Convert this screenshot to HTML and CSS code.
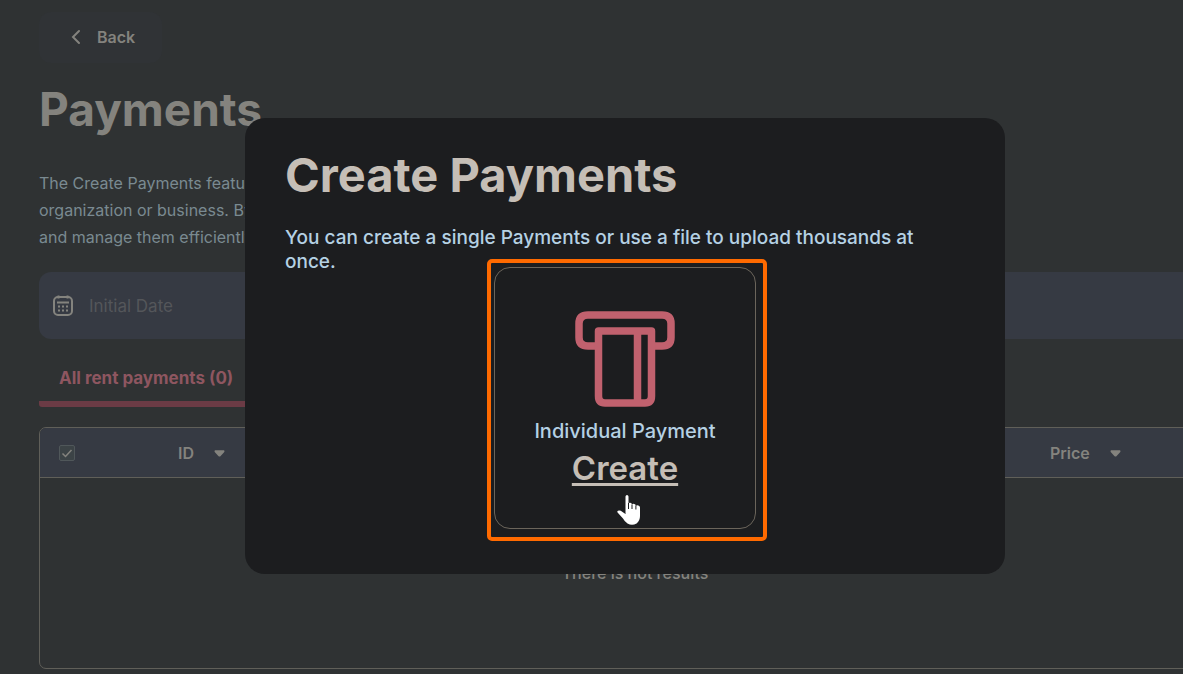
FILE: index.html
```html
<!DOCTYPE html>
<html lang="en">
<head>
<meta charset="utf-8">
<title>Payments</title>
<link rel="stylesheet" href="styles.css">
</head>
<body>
<main class="page">
  <button class="back" type="button">
    <svg class="back-icon" viewBox="0 0 10 16" aria-hidden="true"><path d="M8 2 2 8l6 6"/></svg>
    <span>Back</span>
  </button>
  <h1 class="title">Payments</h1>
  <p class="intro">The Create Payments feature<br>organization or business. By<br>and manage them efficiently</p>
  <label class="date">
    <svg class="date-icon" viewBox="0 0 20 22" aria-hidden="true">
      <rect x="1" y="2" width="18" height="18" rx="4"/>
      <path d="M4 7.500h12M5.500 .5v3M14.500 .5v3"/>
      <path class="dots" d="M5 11.500h2M9 11.500h2M13 11.500h2M5 15.500h2M9 15.500h2M13 15.500h2"/>
    </svg>
    <input class="date-input" type="text" placeholder="Initial Date" aria-label="Initial Date">
  </label>
  <nav class="tabs"><a class="tab" href="#all">All rent payments (0)</a></nav>
  <div class="table-box">
    <table class="table">
      <thead>
        <tr>
          <th class="col-check"><input class="check" type="checkbox" checked aria-label="Select all"></th>
          <th class="col-id"><button class="sort" type="button">ID <svg class="caret" viewBox="0 0 12 7" aria-hidden="true"><path d="M1 0h10q1 1 0 2L7 6.500q-1 .8-2 0L1 2Q0 1 1 0Z"/></svg></button></th>
          <th class="col-price"><button class="sort" type="button">Price <svg class="caret" viewBox="0 0 12 7" aria-hidden="true"><path d="M1 0h10q1 1 0 2L7 6.500q-1 .8-2 0L1 2Q0 1 1 0Z"/></svg></button></th>
        </tr>
      </thead>
      <tbody><tr><td class="empty" colspan="3">There is not results</td></tr></tbody>
    </table>
  </div>
</main>
<div class="overlay">
  <section class="modal" role="dialog" aria-labelledby="modal-title">
    <h2 class="modal-title" id="modal-title">Create Payments</h2>
    <p class="modal-text">You can create a single Payments or use a file to upload thousands at once.</p>
    <div class="card">
      <svg class="card-icon" viewBox="0 0 100 96" aria-hidden="true">
        <path d="M23 35H13Q4 35 4 26.500V12.500Q4 4 13 4H87Q96 4 96 12.500V26.500Q96 35 87 35H77"/>
        <path d="M23.500 20H76.500V85Q76.500 92 70 92H30Q23.500 92 23.500 85ZM62.500 20V92"/>
      </svg>
      <p class="card-label">Individual Payment</p>
      <a class="card-link" href="#create">Create</a>
      <span class="highlight"></span>
      <svg class="cursor" viewBox="0 0 24 32" aria-hidden="true"><path d="M8.500 2.500Q8.700 1 10 1t1.500 1.500V9.500Q12 8.500 13.300 8.800 14.800 9 15 10.500q.8-1 2.200-.5Q18.700 10.300 18.900 11.700q1-.8 2.400-.2Q23 12 23 13.500V22Q23 27 19.500 29.500 15 32 10.500 29.500 7.500 27.500 6 24.500L1 19Q-.5 17.500 1 16.800 3 16 5.500 18L8.500 20Z"/><path class="cursor-lines" d="M11.500 9v6M15 10.500V15M18.900 11.500V15.500"/></svg>
    </div>
  </section>
</div>
</body>
</html>
```
FILE: styles.css
```css
* { box-sizing: border-box; }
body {
  margin: 0;
  min-height: 100vh;
  overflow: hidden;
  background: #2f3233;
  color: #84837e;
  font-family: Inter, "Liberation Sans", sans-serif;
}
button { font: inherit; color: inherit; border: 0; }
.page { margin-right: -48px; padding: 12px 0 0 39px; }
.back {
  display: flex;
  align-items: center;
  gap: 16px;
  padding: 0 27px 2px 32px;
  height: 51px;
  border-radius: 12px;
  background: #303336;
  font-size: 16px;
  line-height: 20px;
  font-weight: 600;
}
.back-icon { width: 10px; height: 16px; fill: none; stroke: currentColor; stroke-width: 2; stroke-linecap: round; }
.title { margin: 18px 0 0; font-size: 46px; line-height: 56px; font-weight: 700; }
.intro { margin: 33px 0 0; font-size: 16px; line-height: 27px; color: #7a8a91; }
.date {
  display: flex;
  align-items: center;
  gap: 16px;
  height: 67px;
  margin-top: 21px;
  padding: 0 14px;
  border-radius: 12px;
  background: #363a43;
}
.date-icon { width: 20px; height: 22px; fill: none; stroke: #84837e; stroke-width: 2; }
.date-input { flex: 1; border: 0; padding: 0; background: none; font: 17px Inter, sans-serif; color: #84837e; }
.date-input::placeholder { color: #54565a; opacity: 1; }
.tabs { display: flex; margin-top: 17px; }
.tab {
  width: 220px;
  padding: 8px 0 9px 20px;
  border-bottom: 6px solid #6b3b45;
  border-radius: 3px;
  color: #8e5660;
  font-size: 17px;
  line-height: 28px;
  font-weight: 700;
  text-decoration: none;
  white-space: nowrap;
}
.table-box { margin-top: 20px; border: 1px solid #605f59; border-radius: 7px; overflow: hidden; }
.table { width: 100%; border-collapse: separate; border-spacing: 0; table-layout: fixed; }
.table th { height: 50px; padding: 0; background: #363a43; border-bottom: 1px solid #605f59; text-align: left; }
.table .col-check { width: 138px; padding-left: 19px; }
.col-id { width: 872px; }
.check {
  display: block;
  appearance: none;
  width: 16px;
  height: 16px;
  margin: 0;
  border: 1px solid #50575a;
  border-radius: 2px;
  background: #3c4346 url("data:image/svg+xml,%3Csvg xmlns='http://www.w3.org/2000/svg' viewBox='0 0 14 14'%3E%3Cpath d='M2.500 7.500l3 3 6-6.500' fill='none' stroke='%2384837e' stroke-width='1.500'/%3E%3C/svg%3E") center / 14px no-repeat;
}
.sort { display: flex; align-items: center; gap: 20px; padding: 0; background: none; font-size: 16px; font-weight: 600; }
.caret { width: 11px; height: 7px; margin-top: 2px; fill: currentColor; }
.table .empty { height: 190px; padding: 0; font-size: 16px; font-weight: 500; text-align: center; }
.overlay { position: fixed; inset: 0; display: flex; justify-content: center; align-items: center; padding: 18px 0 0 67px; }
.modal { width: 760px; padding: 29px 40px 45px; border-radius: 20px; background: #1c1d1f; }
.modal-title { margin: 0; font-size: 47px; line-height: 56px; font-weight: 700; color: #c5beb6; }
.modal-text { margin: 23px 0 0; font-size: 19px; line-height: 24px; font-weight: 500; color: #b5d1e4; }
.card {
  position: relative;
  display: flex;
  flex-direction: column;
  align-items: center;
  width: 262px;
  height: 262px;
  margin: -7px auto 0;
  padding-top: 43px;
  border: 1px solid #6b655b;
  border-radius: 16px;
}
.card-icon { width: 100px; height: 96px; fill: none; stroke: #c1616e; stroke-width: 7.500; stroke-linejoin: round; }
.card-label { margin: 12px 0 0; font-size: 20px; line-height: 24px; font-weight: 500; color: #b5d1e4; }
.card-link { margin-top: 5px; font-size: 33px; line-height: 40px; font-weight: 600; color: #c5beb6; text-decoration-thickness: 3px; text-underline-offset: 3px; text-decoration-skip-ink: none; }
.highlight { position: absolute; inset: -9px -12px -13px -8px; border: 4px solid #ff6a00; border-radius: 5px; pointer-events: none; }
.cursor { position: absolute; left: 122px; top: 226px; width: 24px; height: 32px; fill: #fff; }
.cursor-lines { stroke: #1c1d1f; stroke-width: 1; }
```
